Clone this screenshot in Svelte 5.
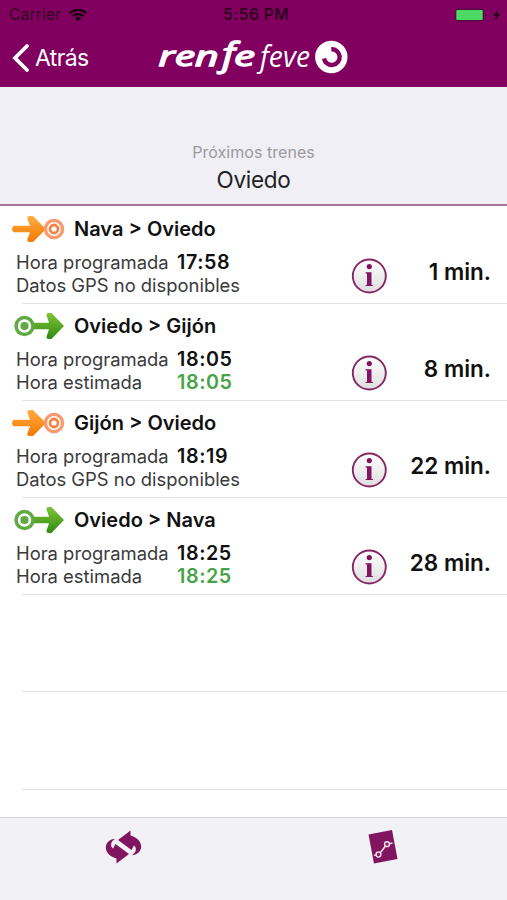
<script lang="ts">
    interface Train {
        from: string;
        to: string;
        arriving: boolean;
        scheduled: string;
        estimated?: string;
        minutes: number;
    }

    const station = 'Oviedo';

    let trains: Train[] = $state([
        { from: 'Nava', to: 'Oviedo', arriving: true, scheduled: '17:58', minutes: 1 },
        { from: 'Oviedo', to: 'Gijón', arriving: false, scheduled: '18:05', estimated: '18:05', minutes: 8 },
        { from: 'Gijón', to: 'Oviedo', arriving: true, scheduled: '18:19', minutes: 22 },
        { from: 'Oviedo', to: 'Nava', arriving: false, scheduled: '18:25', estimated: '18:25', minutes: 28 }
    ]);

    // Blank rows keep the table lines going below the last train
    const emptyRows = [0, 1];
</script>

<div class="screen">
    <header>
        <div class="status-bar">
            <div class="carrier">
                <span>Carrier</span>
                <svg width="20" height="14" viewBox="0 0 20 14">
                    <path d="M1.6 5.3a12 12 0 0 1 16.8 0M4.5 8.2a8 8 0 0 1 11 0" fill="none" stroke="#1c0014" stroke-width="2.3" />
                    <path d="M10 13.2 6.8 10a4.6 4.6 0 0 1 6.4 0z" fill="#1c0014" />
                </svg>
            </div>
            <span class="clock">5:56 PM</span>
            <svg class="battery" width="48" height="16" viewBox="0 0 48 16">
                <rect x="0.2" y="1.7" width="28.500" height="12.6" rx="2" fill="#4b0d3c" />
                <rect x="1.3" y="3" width="26.4" height="10" rx="1" fill="#4cd964" />
                <path d="M30.5 6c1.8.6 1.8 3.400 0 4z" fill="#4b0d3c" />
                <path d="M43.4 2.5 38 8.7h3.3l-1.4 4.8 5.4-6.4H42z" fill="#1c0014" />
            </svg>
        </div>
        <nav>
            <button class="back">
                <svg width="20" height="30" viewBox="0 0 20 30">
                    <path d="M16 3 4 15l12 12" fill="none" stroke="#fff" stroke-width="3.8" stroke-linecap="round" />
                </svg>
                <span>Atrás</span>
            </button>
            <svg class="logo" width="194" height="58" viewBox="0 -6 194 58" fill="#fff">
                <g class="renfe">
                    <text x="2.500" y="31" textLength="60" lengthAdjust="spacingAndGlyphs">ren</text>
                    <text class="tall" x="66" y="31" textLength="13" lengthAdjust="spacingAndGlyphs">f</text>
                    <text x="78" y="31" textLength="21" lengthAdjust="spacingAndGlyphs">e</text>
                </g>
                <text class="feve" x="104" y="32" textLength="50" lengthAdjust="spacingAndGlyphs">feve</text>
                <circle cx="175.300" cy="22" r="16.200" />
                <path d="M175.300 14.200A7.900 7.900 0 1 1 168 23.500" fill="none" stroke="#81005f" stroke-width="4.400" />
            </svg>
        </nav>
    </header>

    <section class="heading">
        <p>Próximos trenes</p>
        <h1>{station}</h1>
    </section>

    <main>
        {#each trains as train}
            <article class="row">
                <div class="route">
                    {#if train.arriving}
                        <svg width="54" height="28" viewBox="0 0 54 28">
                            <defs>
                                <linearGradient id="orange" x2="0" y2="1">
                                    <stop stop-color="#ffad42" />
                                    <stop offset="1" stop-color="#f57900" />
                                </linearGradient>
                            </defs>
                            <path d="M2.500 10.800H19L16.500 4q-1-3 2-3H22L35 14 22 27h-3.500q-3 0-2-3l2.500-6.700H2.500q-3-3.250 0-6.500z" fill="url(#orange)" />
                            <circle cx="43" cy="14" r="8.600" fill="#fff" stroke="#f79a70" stroke-width="3.400" />
                            <circle cx="43" cy="14" r="4" fill="#fff" stroke="#f68545" stroke-width="2.800" />
                        </svg>
                    {:else}
                        <svg width="54" height="28" viewBox="0 0 54 28">
                            <defs>
                                <linearGradient id="green" x2="0" y2="1">
                                    <stop stop-color="#7fc339" />
                                    <stop offset="1" stop-color="#328b12" />
                                </linearGradient>
                            </defs>
                            <path d="M20 10.800h18L35.500 3.500q-.3-2.500 2-2.500H40.500l12.500 13L40.500 27h-3q-2.300 0-2-2.500l2.500-7.200H20z" fill="url(#green)" />
                            <circle cx="13.500" cy="14" r="10.200" fill="#60aa43" />
                            <circle cx="13.500" cy="14" r="5.400" fill="none" stroke="#fff" stroke-width="2.600" />
                        </svg>
                    {/if}
                    <h2>{train.from} &gt; {train.to}</h2>
                </div>
                <div class="details">
                    <div class="times">
                        <p>
                            <span class="label">Hora programada</span>
                            <strong>{train.scheduled}</strong>
                        </p>
                        {#if train.estimated}
                            <p>
                                <span class="label">Hora estimada</span>
                                <strong class="estimated">{train.estimated}</strong>
                            </p>
                        {:else}
                            <p>Datos GPS no disponibles</p>
                        {/if}
                    </div>
                    <button class="info" aria-label="Información">
                        <svg width="36" height="36" viewBox="0 0 36 36">
                            <defs>
                                <linearGradient id="glass" x2="0" y2="1">
                                    <stop stop-color="#fff" />
                                    <stop offset="1" stop-color="#dedee0" />
                                </linearGradient>
                            </defs>
                            <circle cx="18.300" cy="18" r="16.500" fill="url(#glass)" stroke="#862765" stroke-width="1.900" />
                            <circle cx="18.300" cy="8.600" r="2.600" fill="#82155f" />
                            <path d="M14.500 14.300h6v12.400l1.500.5v.9h-7.500v-.9l1.500-.5V15.700l-1.500-.5z" fill="#82155f" />
                        </svg>
                    </button>
                    <strong class="wait">{train.minutes} min.</strong>
                </div>
            </article>
        {/each}
        {#each emptyRows as row (row)}
            <div class="row"></div>
        {/each}
    </main>

    <footer>
        <button aria-label="Actualizar">
            <svg width="38" height="36" viewBox="0 0 38 36" fill="#82155f">
                <path d="M26.500 1.500v5C32.500 8 37.300 12.500 37.200 17.500c-.2 5.500-4.500 8.300-9.200 8.700 4.500-3 5-7.500 2-9.700L27.500 21 14 11z" />
                <path d="M12.500 34.500v-5C6.500 28 1.700 23.500 1.800 18.500c.2-5.500 4.500-8.300 9.200-8.700-4.500 3-5 7.500-2 9.700l2.500-4.500L25 25z" />
            </svg>
        </button>
        <button aria-label="Mapa de línea">
            <svg width="38" height="36" viewBox="0 0 38 36">
                <path d="m4.500 5.500 23.500-4.500 5.500 29-23.500 4.500z" fill="#82155f" />
                <g fill="none" stroke="#eedbe9" stroke-width="1.500">
                    <path d="m16.500 23.500 5-6.500M25.500 14.700l3-.7M10 26.300l2.500-.3" />
                    <circle cx="14.500" cy="25.500" r="2.400" />
                    <circle cx="23" cy="15.200" r="2.400" />
                </g>
            </svg>
        </button>
    </footer>
</div>

<style>
    :global(body) {
        margin: 0;
    }

    .screen {
        display: flex;
        flex-direction: column;
        width: 507px;
        height: 900px;
        overflow: hidden;
        background: #fff;
        color: #111;
        font-family: Inter, "Liberation Sans", sans-serif;
    }

    h1, h2, p {
        margin: 0;
    }

    button {
        display: flex;
        padding: 0;
        border: 0;
        background: none;
        color: inherit;
        font: inherit;
    }

    svg {
        display: block;
        flex: none;
    }

    header, .heading, footer {
        flex: none;
        box-sizing: border-box;
    }

    header {
        height: 87px;
        background: #81005f;
    }

    .status-bar {
        display: grid;
        grid-template-columns: 1fr auto 1fr;
        align-items: center;
        height: 29px;
        padding: 0 4px 0 9px;
        color: #30001f;
        font-size: 15.5px;
        line-height: 29px;
    }

    .carrier {
        display: flex;
        align-items: center;
        gap: 7px;
        letter-spacing: 0.2px;
    }

    .clock {
        font-weight: 600;
        letter-spacing: 0.5px;
    }

    .battery {
        justify-self: end;
    }

    nav {
        display: flex;
        align-items: center;
        height: 58px;
        padding-left: 11px;
    }

    .logo {
        overflow: visible;
    }

    .back {
        align-items: center;
        gap: 4px;
        width: 145px;
        color: #fff;
        font-size: 23px;
        letter-spacing: -0.6px;
    }

    .renfe {
        font: italic 400 27px "Open Sans", sans-serif;
        stroke: #fff;
        stroke-width: 1.3px;
    }

    .renfe .tall {
        font-size: 33px;
    }

    .feve {
        font: italic 400 29px "Open Sans", sans-serif;
    }

    .heading {
        height: 119px;
        padding-top: 54px;
        border-bottom: 2px solid #a9749b;
        background: #f0eff5;
        text-align: center;
    }

    .heading p {
        color: #9b9a9f;
        font-size: 16px;
        line-height: 22px;
        letter-spacing: 0.05px;
    }

    .heading h1 {
        color: #222;
        font-size: 22.5px;
        font-weight: 400;
        line-height: 34px;
        letter-spacing: -0.3px;
    }

    main {
        flex: 1;
        min-height: 0;
        padding-top: 1px;
    }

    .row {
        height: 97.1px;
        box-sizing: border-box;
        padding-top: 8px;
        background: linear-gradient(#e0e0e2, #e0e0e2) 22px 100% / 100% 1px no-repeat;
    }

    .route {
        display: flex;
        align-items: center;
        gap: 9px;
        height: 28px;
        padding-left: 11px;
    }

    .route h2 {
        font-size: 20px;
        font-weight: 600;
    }

    .details {
        display: grid;
        grid-template-columns: 335px 36px 1fr;
        padding: 8px 16px 0;
    }

    .times p {
        display: flex;
        height: 23px;
        color: #3a3a3c;
        font-size: 18.4px;
        line-height: 23px;
        white-space: nowrap;
    }

    .label {
        width: 161px;
    }

    .times strong {
        color: #111;
        font-size: 19.7px;
        font-weight: 600;
        letter-spacing: 0.6px;
    }

    .times .estimated {
        color: #45a447;
    }

    .info {
        align-self: start;
        margin-top: 7px;
    }

    .wait {
        margin-top: 7px;
        font-size: 22.5px;
        font-weight: 600;
        line-height: 28px;
        text-align: right;
    }

    footer {
        display: grid;
        grid-template-columns: 1fr 1fr;
        height: 83px;
        padding: 11px 0 0 5px;
        border-top: 1px solid #d5d4da;
        background: #f2f1f6;
    }

    footer button {
        justify-self: start;
        height: 36px;
        margin-left: 99px;
    }

    footer button:last-child {
        margin-left: 108px;
    }
</style>
